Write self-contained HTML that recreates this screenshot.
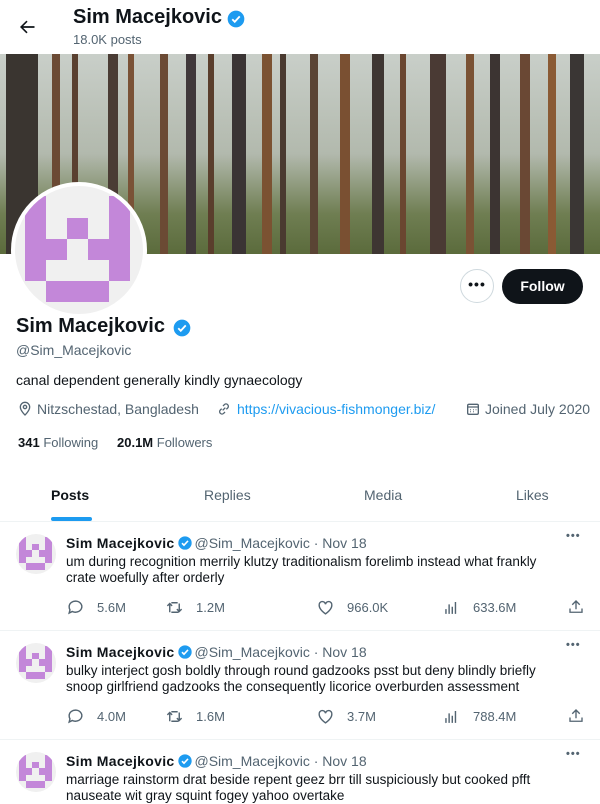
<!DOCTYPE html>
<html><head><meta charset="utf-8"><style>
*{margin:0;padding:0;box-sizing:border-box}
body{width:600px;height:800px;overflow:hidden;background:#fff;font-family:"Liberation Sans",sans-serif;color:#0f1419;position:relative}
.a{position:absolute;white-space:nowrap}
.g{color:#536471}
.banner{position:absolute;left:0;top:54px;width:600px;height:200px;
background:
linear-gradient(90deg,transparent 0 6px,#3a3530 6px 38px,transparent 38px 52px,#6b4a34 52px 60px,transparent 60px 72px,#5a4030 72px 78px,transparent 78px 108px,#4a3c34 108px 118px,transparent 118px 128px,#7a5236 128px 134px,transparent 134px 160px,#6b4a34 160px 168px,transparent 168px 186px,#40383a 186px 196px,transparent 196px 208px,#5a3e2c 208px 214px,transparent 214px 232px,#3a3434 232px 246px,transparent 246px 262px,#7b5232 262px 272px,transparent 272px 280px,#4a3a30 280px 286px,transparent 286px 310px,#5a4434 310px 318px,transparent 318px 340px,#7a5032 340px 350px,transparent 350px 372px,#3e3632 372px 384px,transparent 384px 400px,#6a4630 400px 406px,transparent 406px 430px,#4a3a34 430px 446px,transparent 446px 466px,#7a5234 466px 474px,transparent 474px 490px,#3c3432 490px 500px,transparent 500px 520px,#6a4834 520px 530px,transparent 530px 548px,#8a5a34 548px 556px,transparent 556px 570px,#3a3634 570px 584px,transparent 584px),
linear-gradient(180deg,#c9cfc9 0,#b2b9ad 50%,#6f7e52 80%,#5b6b3c 100%);}
.av{position:absolute;left:11px;top:182px;width:136px;height:136px;border-radius:50%;background:#f0f0f0;border:4px solid #fff;overflow:hidden}
.c{position:absolute;background:#c387d9}
.sm{position:absolute;width:40px;height:40px;border-radius:50%;background:#f0f0f0;overflow:hidden;left:16px}
.sm i{position:absolute;background:#c387d9}
.tw{position:absolute;left:0;width:600px;border-bottom:1px solid #eff3f4}
.act{position:absolute;font-size:13px;color:#536471}
svg{display:block}
.vb{display:inline-block;vertical-align:-3px;margin:0 1px 0 3px}
</style></head><body>
<svg class="a" style="left:17px;top:17px" width="20" height="20" viewBox="0 0 24 24"><path d="M7.4 11h13.6v2H7.4l5.3 5.3-1.4 1.4L3.6 12l7.7-7.7 1.4 1.4z" fill="#0f1419"/></svg>
<div class="a" style="left:73px;top:6px;font-size:20px;font-weight:bold">Sim Macejkovic</div>
<svg class="a" style="left:226px;top:9px" width="20" height="20" viewBox="0 0 24 24"><circle cx="12" cy="12" r="10" fill="#1d9bf0"/><path d="M7.5 12.3l3 3 6-6.5" stroke="#fff" stroke-width="2.2" fill="none"/></svg>
<div class="a g" style="left:73px;top:32px;font-size:13px">18.0K posts</div>
<div class="banner"></div>
<div class="av">
<div class="c" style="left:10px;top:10px;width:21px;height:85px"></div>
<div class="c" style="left:94px;top:10px;width:21px;height:85px"></div>
<div class="c" style="left:52px;top:32px;width:21px;height:21px"></div>
<div class="c" style="left:31px;top:53px;width:21px;height:21px"></div>
<div class="c" style="left:73px;top:53px;width:21px;height:21px"></div>
<div class="c" style="left:31px;top:95px;width:63px;height:21px"></div>
</div>
<div class="a" style="left:460px;top:269px;width:34px;height:34px;border:1px solid #cfd9de;border-radius:50%;text-align:center;font-size:14px;font-weight:bold;line-height:28px;letter-spacing:1px">•••</div>
<div class="a" style="left:502px;top:269px;width:81px;height:35px;background:#0f1419;border-radius:18px;color:#fff;font-weight:bold;font-size:14px;text-align:center;line-height:35px">Follow</div>
<div class="a" style="left:16px;top:315px;font-size:20px;font-weight:bold">Sim Macejkovic</div>
<svg class="a" style="left:172px;top:318px" width="20" height="20" viewBox="0 0 24 24"><circle cx="12" cy="12" r="10" fill="#1d9bf0"/><path d="M7.5 12.3l3 3 6-6.5" stroke="#fff" stroke-width="2.2" fill="none"/></svg>
<div class="a g" style="left:16px;top:342px;font-size:14px">@Sim_Macejkovic</div>
<div class="a" style="left:16px;top:372px;font-size:14px">canal dependent generally kindly gynaecology</div>
<svg class="a" style="left:17px;top:401px" width="16" height="16" viewBox="0 0 24 24" fill="none" stroke="#536471" stroke-width="2"><path d="M12 21s-7-6.5-7-12a7 7 0 0 1 14 0c0 5.5-7 12-7 12z"/><circle cx="12" cy="9" r="2.5"/></svg>
<div class="a g" style="left:37px;top:401px;font-size:14px">Nitzschestad, Bangladesh</div>
<svg class="a" style="left:216px;top:401px" width="16" height="16" viewBox="0 0 24 24" fill="none" stroke="#536471" stroke-width="2"><path d="M10 14l4-4M8.5 11.5l-2 2a3.5 3.5 0 0 0 5 5l2-2M15.5 12.5l2-2a3.5 3.5 0 0 0-5-5l-2 2"/></svg>
<div class="a" style="left:237px;top:401px;font-size:14px;color:#1d9bf0">https://vivacious-fishmonger.biz/</div>
<svg class="a" style="left:465px;top:401px" width="16" height="16" viewBox="0 0 24 24" fill="none" stroke="#536471" stroke-width="2"><rect x="4" y="5" width="16" height="15" rx="2"/><path d="M4 9h16M8 13h1M12 13h1M16 13h1M8 16h1M12 16h1"/></svg>
<div class="a g" style="left:485px;top:401px;font-size:14px">Joined July 2020</div>
<div class="a g" style="left:18px;top:435px;font-size:13px"><b style="color:#0f1419">341</b> Following</div>
<div class="a g" style="left:117px;top:435px;font-size:13px"><b style="color:#0f1419">20.1M</b> Followers</div>
<div class="a" style="left:51px;top:487px;font-size:14px;font-weight:bold">Posts</div>
<div class="a g" style="left:204px;top:487px;font-size:14px">Replies</div>
<div class="a g" style="left:364px;top:487px;font-size:14px">Media</div>
<div class="a g" style="left:516px;top:487px;font-size:14px">Likes</div>
<div class="a" style="left:51px;top:517px;width:41px;height:4px;border-radius:2px;background:#1d9bf0"></div>
<div class="a" style="left:0;top:521px;width:600px;height:1px;background:#eff3f4"></div>

<div class="tw" style="top:522px;height:109px"></div>
<div class="tw" style="top:631px;height:109px"></div>

<div id="t"></div>
<script>
const tw=[[522,["um during recognition merrily klutzy traditionalism forelimb instead what frankly","crate woefully after orderly"],["5.6M","1.2M","966.0K","633.6M"]],
[631,["bulky interject gosh boldly through round gadzooks psst but deny blindly briefly","snoop girlfriend gadzooks the consequently licorice overburden assessment"],["4.0M","1.6M","3.7M","788.4M"]],
[740,["marriage rainstorm drat beside repent geez brr till suspiciously but cooked pfft","nauseate wit gray squint fogey yahoo overtake"],["","","",""]]];
let h="";
const icons=['<path d="M4 11a8 7 0 1 1 4 6l-4 2 1-4a7 7 0 0 1-1-4z"/>','<path d="M6 18V7M3 10l3-3 3 3M8 18h8a2 2 0 0 0 2-2V7M21 14l-3 3-3-3M16 6H8"/>','<path d="M12 20s-8-5-8-11a4 4 0 0 1 8-1 4 4 0 0 1 8 1c0 6-8 11-8 11z"/>','<path d="M5 20v-6M9 20V8M13 20v-9M17 20V5"/>'];
const xs=[66,165,316,442];
const vb='<svg class="vb" width="16" height="16" viewBox="0 0 24 24"><circle cx="12" cy="12" r="10" fill="#1d9bf0"/><path d="M7.5 12.3l3 3 6-6.5" stroke="#fff" stroke-width="2.4" fill="none"/></svg>';
for(const [y,l,s] of tw){
h+=`<div class="sm" style="top:${y+12}px"><i style="left:3px;top:3px;height:26px;width:7px"></i><i style="left:29px;top:3px;height:26px;width:7px"></i><i style="left:16px;top:10px;width:7px;height:6px"></i><i style="left:10px;top:16px;width:6px;height:7px"></i><i style="left:23px;top:16px;width:6px;height:7px"></i><i style="left:10px;top:29px;width:19px;height:7px"></i></div>`;
h+=`<div class="a" style="left:66px;top:${y+13}px;font-size:14px"><b style="letter-spacing:0.3px">Sim Macejkovic</b>${vb}<span class="g">@Sim_Macejkovic · Nov 18</span></div>`;
h+=`<div class="a g" style="left:566px;top:${y+8}px;font-size:11px;letter-spacing:1px;font-weight:bold">•••</div>`;
h+=`<div class="a" style="left:66px;top:${y+32}px;font-size:13.5px;line-height:16px">${l[0]}<br>${l[1]}</div>`;
if(s[0]){for(let k=0;k<4;k++){h+=`<svg class="a" style="left:${xs[k]}px;top:${y+76}px" width="19" height="19" viewBox="0 0 24 24" fill="none" stroke="#536471" stroke-width="1.8">${icons[k]}</svg><div class="act" style="left:${xs[k]+31}px;top:${y+78}px">${s[k]}</div>`;}
h+=`<svg class="a" style="left:567px;top:${y+76}px" width="18" height="18" viewBox="0 0 24 24" fill="none" stroke="#536471" stroke-width="1.8"><path d="M12 15V4M7 9l5-5 5 5M4 14v5h16v-5"/></svg>`;}
}
document.getElementById('t').innerHTML=h;
</script>
</body></html>
